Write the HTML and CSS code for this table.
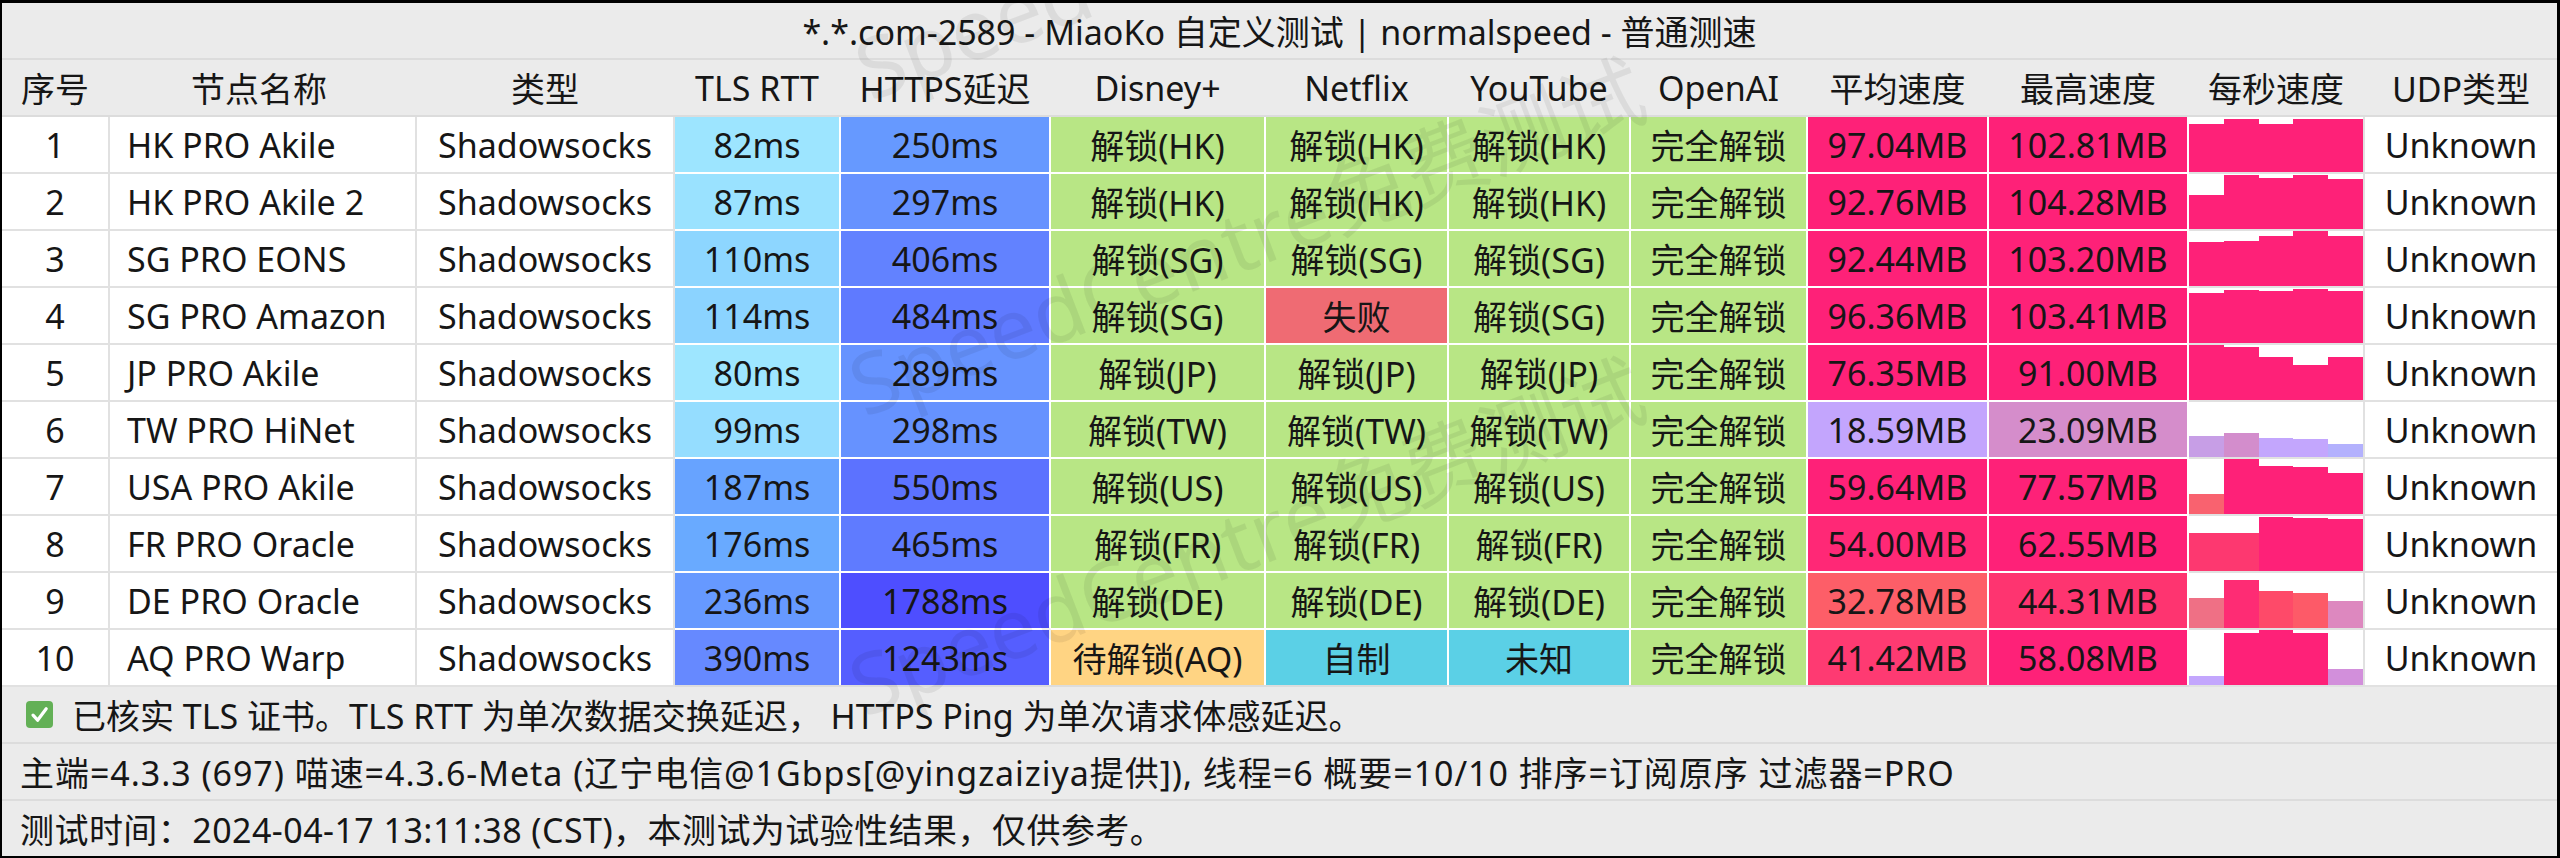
FILE: index.html
```html
<!DOCTYPE html>
<html lang="zh-CN">
<head>
<meta charset="utf-8">
<title>MiaoKo 自定义测试</title>
<link rel="stylesheet" href="styles.css">
</head>
<body>
<div class="sheet">
  <div class="title">*.*.com-2589 - MiaoKo 自定义测试 | normalspeed - 普通测速</div>
  <div class="grid head">
    <div class="cell">序号</div>
    <div class="cell name-head">节点名称</div>
    <div class="cell">类型</div>
    <div class="cell">TLS RTT</div>
    <div class="cell">HTTPS延迟</div>
    <div class="cell">Disney+</div>
    <div class="cell">Netflix</div>
    <div class="cell">YouTube</div>
    <div class="cell">OpenAI</div>
    <div class="cell">平均速度</div>
    <div class="cell">最高速度</div>
    <div class="cell">每秒速度</div>
    <div class="cell">UDP类型</div>
  </div>
  <div class="rows">
    <div class="grid row">
      <div class="cell plain">1</div><div class="cell plain name">HK PRO Akile</div><div class="cell plain">Shadowsocks</div>
      <div class="cell" style="background:#9de5ff">82ms</div><div class="cell" style="background:#6699ff">250ms</div>
      <div class="cell ok">解锁(HK)</div><div class="cell ok">解锁(HK)</div><div class="cell ok">解锁(HK)</div><div class="cell ok">完全解锁</div>
      <div class="cell" style="background:#fe2178">97.04MB</div><div class="cell" style="background:#fe2178">102.81MB</div>
      <div class="cell plain bars"><i style="height:88%;background:#fe2178"></i><i style="height:97%;background:#fe2178"></i><i style="height:88%;background:#fe2178"></i><i style="height:97%;background:#fe2178"></i><i style="height:97%;background:#fe2178"></i></div>
      <div class="cell plain">Unknown</div>
    </div>
    <div class="grid row">
      <div class="cell plain">2</div><div class="cell plain name">HK PRO Akile 2</div><div class="cell plain">Shadowsocks</div>
      <div class="cell" style="background:#9ae2ff">87ms</div><div class="cell" style="background:#6692ff">297ms</div>
      <div class="cell ok">解锁(HK)</div><div class="cell ok">解锁(HK)</div><div class="cell ok">解锁(HK)</div><div class="cell ok">完全解锁</div>
      <div class="cell" style="background:#fe2178">92.76MB</div><div class="cell" style="background:#fe2178">104.28MB</div>
      <div class="cell plain bars"><i style="height:62%;background:#fe2178"></i><i style="height:98%;background:#fe2178"></i><i style="height:92%;background:#fe2178"></i><i style="height:99%;background:#fe2178"></i><i style="height:91%;background:#fe2178"></i></div>
      <div class="cell plain">Unknown</div>
    </div>
    <div class="grid row">
      <div class="cell plain">3</div><div class="cell plain name">SG PRO EONS</div><div class="cell plain">Shadowsocks</div>
      <div class="cell" style="background:#8dd6ff">110ms</div><div class="cell" style="background:#6282ff">406ms</div>
      <div class="cell ok">解锁(SG)</div><div class="cell ok">解锁(SG)</div><div class="cell ok">解锁(SG)</div><div class="cell ok">完全解锁</div>
      <div class="cell" style="background:#fe2178">92.44MB</div><div class="cell" style="background:#fe2178">103.20MB</div>
      <div class="cell plain bars"><i style="height:80%;background:#fe2178"></i><i style="height:82%;background:#fe2178"></i><i style="height:91%;background:#fe2178"></i><i style="height:100%;background:#fe2178"></i><i style="height:91%;background:#fe2178"></i></div>
      <div class="cell plain">Unknown</div>
    </div>
    <div class="grid row">
      <div class="cell plain">4</div><div class="cell plain name">SG PRO Amazon</div><div class="cell plain">Shadowsocks</div>
      <div class="cell" style="background:#8bd3ff">114ms</div><div class="cell" style="background:#5f7aff">484ms</div>
      <div class="cell ok">解锁(SG)</div><div class="cell fail">失败</div><div class="cell ok">解锁(SG)</div><div class="cell ok">完全解锁</div>
      <div class="cell" style="background:#fe2178">96.36MB</div><div class="cell" style="background:#fe2178">103.41MB</div>
      <div class="cell plain bars"><i style="height:91%;background:#fe2178"></i><i style="height:97%;background:#fe2178"></i><i style="height:95%;background:#fe2178"></i><i style="height:99%;background:#fe2178"></i><i style="height:95%;background:#fe2178"></i></div>
      <div class="cell plain">Unknown</div>
    </div>
    <div class="grid row">
      <div class="cell plain">5</div><div class="cell plain name">JP PRO Akile</div><div class="cell plain">Shadowsocks</div>
      <div class="cell" style="background:#9ee6ff">80ms</div><div class="cell" style="background:#6693ff">289ms</div>
      <div class="cell ok">解锁(JP)</div><div class="cell ok">解锁(JP)</div><div class="cell ok">解锁(JP)</div><div class="cell ok">完全解锁</div>
      <div class="cell" style="background:#fe2178">76.35MB</div><div class="cell" style="background:#fe2178">91.00MB</div>
      <div class="cell plain bars"><i style="height:100%;background:#fe2178"></i><i style="height:97%;background:#fe2178"></i><i style="height:78%;background:#fe2178"></i><i style="height:63%;background:#fe2178"></i><i style="height:78%;background:#fe2178"></i></div>
      <div class="cell plain">Unknown</div>
    </div>
    <div class="grid row">
      <div class="cell plain">6</div><div class="cell plain name">TW PRO HiNet</div><div class="cell plain">Shadowsocks</div>
      <div class="cell" style="background:#95ddff">99ms</div><div class="cell" style="background:#6692ff">298ms</div>
      <div class="cell ok">解锁(TW)</div><div class="cell ok">解锁(TW)</div><div class="cell ok">解锁(TW)</div><div class="cell ok">完全解锁</div>
      <div class="cell" style="background:#c3a5fd">18.59MB</div><div class="cell" style="background:#d58dcb">23.09MB</div>
      <div class="cell plain bars"><i style="height:39%;background:#c79ee6"></i><i style="height:43%;background:#d38dcc"></i><i style="height:34%;background:#c3a6fd"></i><i style="height:33%;background:#c3a6fd"></i><i style="height:24%;background:#b3b1fd"></i></div>
      <div class="cell plain">Unknown</div>
    </div>
    <div class="grid row">
      <div class="cell plain">7</div><div class="cell plain name">USA PRO Akile</div><div class="cell plain">Shadowsocks</div>
      <div class="cell" style="background:#67a3ff">187ms</div><div class="cell" style="background:#5c72ff">550ms</div>
      <div class="cell ok">解锁(US)</div><div class="cell ok">解锁(US)</div><div class="cell ok">解锁(US)</div><div class="cell ok">完全解锁</div>
      <div class="cell" style="background:#fe2178">59.64MB</div><div class="cell" style="background:#fe2178">77.57MB</div>
      <div class="cell plain bars"><i style="height:37%;background:#f9626f"></i><i style="height:100%;background:#fe2178"></i><i style="height:88%;background:#fe2178"></i><i style="height:86%;background:#fe2178"></i><i style="height:74%;background:#fe2178"></i></div>
      <div class="cell plain">Unknown</div>
    </div>
    <div class="grid row">
      <div class="cell plain">8</div><div class="cell plain name">FR PRO Oracle</div><div class="cell plain">Shadowsocks</div>
      <div class="cell" style="background:#69aaff">176ms</div><div class="cell" style="background:#5f7bff">465ms</div>
      <div class="cell ok">解锁(FR)</div><div class="cell ok">解锁(FR)</div><div class="cell ok">解锁(FR)</div><div class="cell ok">完全解锁</div>
      <div class="cell" style="background:#ff2876">54.00MB</div><div class="cell" style="background:#fe2178">62.55MB</div>
      <div class="cell plain bars"><i style="height:69%;background:#fd3870"></i><i style="height:70%;background:#fd3870"></i><i style="height:99%;background:#fe2178"></i><i style="height:97%;background:#fe2178"></i><i style="height:95%;background:#fe2178"></i></div>
      <div class="cell plain">Unknown</div>
    </div>
    <div class="grid row">
      <div class="cell plain">9</div><div class="cell plain name">DE PRO Oracle</div><div class="cell plain">Shadowsocks</div>
      <div class="cell" style="background:#6699ff">236ms</div><div class="cell" style="background:#4e4eff">1788ms</div>
      <div class="cell ok">解锁(DE)</div><div class="cell ok">解锁(DE)</div><div class="cell ok">解锁(DE)</div><div class="cell ok">完全解锁</div>
      <div class="cell" style="background:#fd5e68">32.78MB</div><div class="cell" style="background:#fe3470">44.31MB</div>
      <div class="cell plain bars"><i style="height:55%;background:#ef7085"></i><i style="height:87%;background:#fe2c74"></i><i style="height:68%;background:#fe4a69"></i><i style="height:63%;background:#fd5a68"></i><i style="height:49%;background:#dd88bf"></i></div>
      <div class="cell plain">Unknown</div>
    </div>
    <div class="grid row">
      <div class="cell plain">10</div><div class="cell plain name">AQ PRO Warp</div><div class="cell plain">Shadowsocks</div>
      <div class="cell" style="background:#6689ff">390ms</div><div class="cell" style="background:#555eff">1243ms</div>
      <div class="cell pend">待解锁(AQ)</div><div class="cell self">自制</div><div class="cell self">未知</div><div class="cell ok">完全解锁</div>
      <div class="cell" style="background:#fe3a72">41.42MB</div><div class="cell" style="background:#fe2178">58.08MB</div>
      <div class="cell plain bars"><i style="height:16%;background:#c3a6fd"></i><i style="height:95%;background:#fe2178"></i><i style="height:100%;background:#fe2178"></i><i style="height:95%;background:#fe2178"></i><i style="height:30%;background:#d28fdb"></i></div>
      <div class="cell plain">Unknown</div>
    </div>
  </div>
  <div class="note note-check">
    <svg class="check" width="27" height="27" viewBox="0 0 27 27" aria-hidden="true"><rect width="27" height="27" rx="4" fill="#63b056"/><path d="M7 14.2 L11.6 19.2 L20.2 7.8" stroke="#fff" stroke-width="3.2" fill="none" stroke-linecap="round" stroke-linejoin="round"/></svg>
    <span>已核实 TLS 证书。TLS RTT 为单次数据交换延迟， HTTPS Ping 为单次请求体感延迟。</span>
  </div>
  <div class="note note-info">主端=4.3.3 (697) 喵速=4.3.6-Meta (辽宁电信@1Gbps[@yingzaiziya提供]), 线程=6 概要=10/10 排序=订阅原序 过滤器=PRO</div>
  <div class="note note-time">测试时间：2024-04-17 13:11:38 (CST)，本测试为试验性结果，仅供参考。</div>
  <div class="wm wm0">Speed</div>
  <div class="wm wm1">SpeedCentre免费测试</div>
  <div class="wm wm2">SpeedCentre免费测试</div>
</div>
</body>
</html>
```
FILE: styles.css
```css
html, body {
  margin: 0;
}
body {
  width: 2560px;
  height: 858px;
  box-sizing: border-box;
  padding: 3px 3px 2px 2px;
  background: #000;
  overflow: hidden;
  font-family: "Noto Sans", "Noto Sans CJK SC", sans-serif;
  font-size: 34px;
  color: #161616;
}
.sheet {
  position: relative;
  height: 100%;
  display: flex;
  flex-direction: column;
  gap: 2px;
  background: #dcdcdc;
  overflow: hidden;
}
.title {
  height: 55px;
  flex: none;
  background: #ebebeb;
  display: flex;
  align-items: center;
  justify-content: center;
  white-space: nowrap;
}
.grid {
  display: grid;
  grid-template-columns: 106px 305px 256px 164px 208px 213px 181px 180px 175px 179px 198px 174px 192px;
  column-gap: 2px;
  height: 55px;
  flex: none;
}
.head {
  background: #ebebeb;
}
.cell {
  display: flex;
  align-items: center;
  justify-content: center;
  white-space: nowrap;
  min-width: 0;
}
.name-head {
  justify-content: flex-start;
  padding-left: 81px;
}
.rows {
  display: flex;
  flex-direction: column;
  gap: 2px;
  background: #fff;
  flex: none;
}
.row {
  background: #fff;
}
.plain {
  background: #fff;
  box-shadow: 0 2px 0 #e1e1e1, 2px 0 0 #e1e1e1, 2px 2px 0 #e1e1e1;
}
.name {
  justify-content: flex-start;
  padding-left: 17px;
}
.ok {
  background: #b8e685;
}
.fail {
  background: #ef6b73;
}
.pend {
  background: #ffd483;
}
.self {
  background: #5bd0e6;
}
.bars {
  align-items: flex-end;
  justify-content: stretch;
}
.bars i {
  display: block;
  flex: 1;
}
.note {
  height: 55px;
  flex: none;
  background: #ebebeb;
  display: flex;
  align-items: center;
  padding-left: 18px;
  white-space: nowrap;
}
.note-check {
  padding-left: 24px;
  gap: 19px;
}
.note-info {
  letter-spacing: 0.95px;
}
.note-time {
  letter-spacing: 0.45px;
}
.check {
  flex: none;
}
.wm {
  position: absolute;
  font-size: 84px;
  line-height: 1;
  white-space: nowrap;
  color: rgba(0, 0, 0, 0.065);
  transform-origin: left bottom;
  transform: rotate(-21deg);
  pointer-events: none;
}
.wm0 {
  left: 872px;
  top: 24px;
}
.wm1 {
  left: 866px;
  top: 340px;
}
.wm2 {
  left: 866px;
  top: 640px;
}
```
